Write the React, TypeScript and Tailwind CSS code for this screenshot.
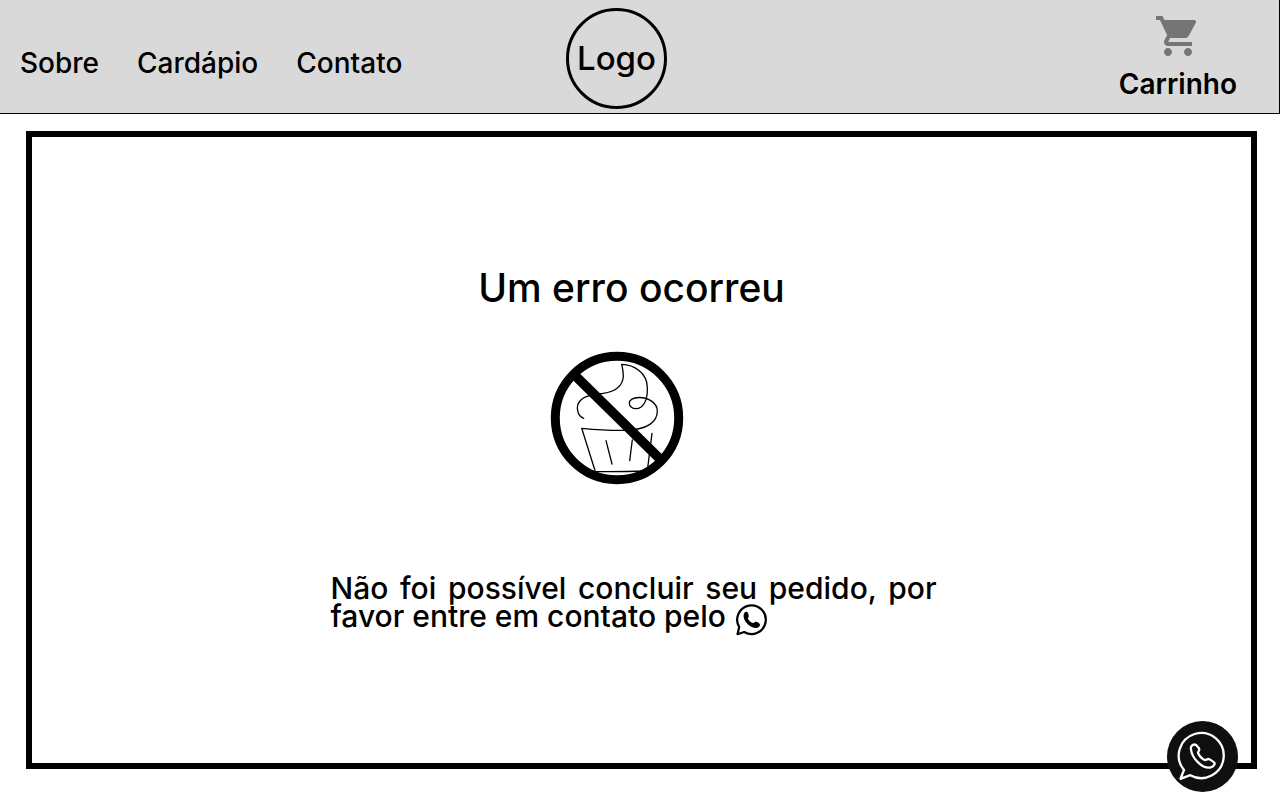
import { MdShoppingCart } from "react-icons/md";

function BlockedCupcake() {
  return (
    <svg viewBox="0 0 134 134" fill="none" stroke="black" className="h-[134px] w-[134px]" role="img" aria-label="Pedido não concluído">
      <g strokeWidth="1.3" strokeLinecap="round" strokeLinejoin="round">
        <path d="M33.700 67.300C27 65 25.500 55 30 50C34.500 44 45 43.500 53.300 42.300C65 40.500 72.500 35 73.300 25.700C73.600 21 72.500 17.500 71.700 13.300C84 13.500 97 22 97.300 36C97.600 43 96.500 48.500 94.500 52C92 56.500 88.500 57.700 86 57.700C82 57.700 79.300 55 79.300 52.300C79.300 49 83 46.500 89 46.500C100 46.500 107.300 53 107.300 60C107.300 70 99 79.300 73.300 79.300C59 79.600 45 78.500 31.700 77.300L45.300 120.500C62 120.900 80 120.500 97.300 120L102 82.300" />
        <path d="M56 89.700L62 113M82.300 89L79.700 109.700" />
      </g>
      <circle cx="67" cy="67" r="61.700" strokeWidth="9" />
      <path d="M24 23.500L111 109" strokeWidth="9.500" />
    </svg>
  );
}

function WhatsAppSolid() {
  return (
    <svg viewBox="0 0 32 32" fill="none" className="mt-0.5 h-8 w-8" role="img" aria-label="WhatsApp">
      <path d="M3.200 23A14.300 14.300 0 1 1 8.200 28L1.500 30.200Z" stroke="black" strokeWidth="2.200" strokeLinejoin="round" />
      <path d="M7.600 12.200C7.400 9.800 8.700 7.700 10.600 7.800C12.200 8 13 11.600 12.600 12.900C12.300 13.700 11.600 13.900 11.900 14.700C13 16.700 14.900 18.400 17 19.100C18 19.300 18.600 17.800 19.800 17.800C21.300 17.800 24 19.400 24 20.700C24 22.500 22.300 23.900 20.300 23.900C14 23.700 8 18.300 7.600 12.200Z" fill="black" />
    </svg>
  );
}

function WhatsAppOutline() {
  return (
    <svg viewBox="0 0 71 71" fill="none" stroke="white" strokeWidth="2.300" strokeLinejoin="round" className="h-[71px] w-[71px]" aria-hidden="true">
      <path d="M17 49A22.500 22.500 0 1 1 23.300 54.200L13.500 57.800Z" />
      <path d="M23.900 28C23.600 25.300 25.300 23.500 27.500 23.500C29.500 23.500 30.600 25.600 31.900 27.300C33.200 29.300 30.800 30.500 31 31.900C31.800 34.400 35.300 38.300 37.800 39C39.700 39.200 40.500 37.300 42.400 38.200C44 39 46.300 40.500 47.400 41.800C48.300 43.500 46 45.800 43.500 46.500C35.500 48 24.800 37.500 23.900 28Z" />
    </svg>
  );
}

export default function App() {
  return (
    <div className="relative flex min-h-screen flex-col bg-white font-['Inter','Open_Sans',sans-serif] font-medium text-black">
      <header className="grid grid-cols-[1fr_auto_1fr] border-r border-b border-black bg-[#d9d9d9] pr-[46px]">
        <nav className="flex items-start gap-[38px] pt-[47px] pl-5 text-[28px] leading-8">
          <a href="#sobre">Sobre</a>
          <a href="#cardapio">Cardápio</a>
          <a href="#contato">Contato</a>
        </nav>
        <a href="#inicio" className="mt-2 mb-1 flex h-[101px] w-[101px] items-center justify-center rounded-full border-3 border-black text-[33px]">
          Logo
        </a>
        <a href="#carrinho" className="-mr-1 flex flex-col items-center justify-self-end pt-3 text-[28px] leading-8 font-semibold">
          <MdShoppingCart className="h-12 w-12 text-[#757575]" aria-hidden="true" />
          <span className="mt-2">Carrinho</span>
        </a>
      </header>

      <main className="mt-[17px] mr-[23px] mb-[31px] ml-[26px] flex flex-1 flex-col items-center border-6 border-black px-6 pt-32">
        <h1 className="mr-5 text-[39px] leading-[46px]">Um erro ocorreu</h1>
        <div className="mt-10 mr-[50px]">
          <BlockedCupcake />
        </div>
        <p className="mt-[89px] mr-4 w-full max-w-[606px] text-justify text-[30px] leading-7">
          Não foi possível concluir seu pedido, por favor entre em contato pelo{" "}
          <a href="#whatsapp" className="ml-0.5 inline-block h-7 align-top">
            <WhatsAppSolid />
          </a>
        </p>
      </main>

      <button type="button" aria-label="Abrir WhatsApp" className="absolute right-[42px] bottom-2 rounded-full bg-[#100f0d]">
        <WhatsAppOutline />
      </button>
    </div>
  );
}
